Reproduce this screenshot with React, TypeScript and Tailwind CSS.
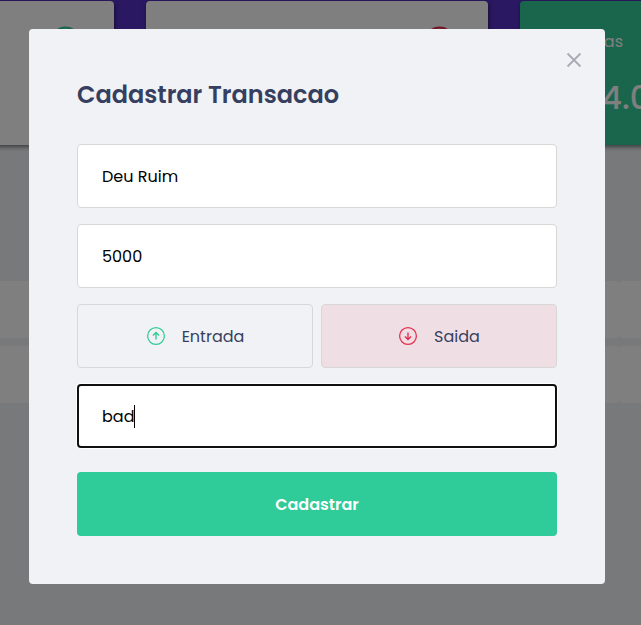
import React from "react";

function ArrowCircle({ down = false, className }: { down?: boolean; className: string }) {
  return (
    <svg viewBox="0 0 20 20" fill="none" stroke="currentColor" className={className}>
      <circle cx="10" cy="10" r="8.4" strokeWidth="1.25" />
      <g transform={down ? "rotate(180 10 10)" : undefined}>
        <path d="M10 13.6V6.6M6.9 9.5L10 6.4L13.1 9.5" strokeWidth="1.4" />
      </g>
    </svg>
  );
}

function SummaryCard({ title, value, green = false, icon }: { title: string; value?: string; green?: boolean; icon?: React.ReactNode }) {
  return (
    <div
      className={
        "h-36 rounded px-8 pt-6 shadow-[1px_2px_4px_rgba(0,0,0,0.5)] " +
        (green ? "bg-[#33cc99] text-white" : "bg-white text-[#363f5f]")
      }
    >
      <div className="flex h-8 items-center justify-between">
        <p className="pt-0.5 text-[16px] leading-8">{title}</p>
        {icon}
      </div>
      {value && (
        <strong className="mt-[14px] block whitespace-nowrap text-[32px] font-medium leading-[54px]">{value}</strong>
      )}
    </div>
  );
}

function TableRow() {
  return (
    <div className="grid h-[57px] grid-cols-[847px_243px]">
      <div className="rounded bg-white" />
      <div className="rounded bg-white" />
    </div>
  );
}

const field =
  "h-16 w-full rounded border border-[#d7d7d7] bg-white px-6 text-[16px] text-black outline-none";

export default function App() {
  return (
    <div className="relative h-[625px] w-[641px] overflow-hidden bg-[#f0f2f5] font-['Poppins','Inter',sans-serif] text-[16px]">
      <div className="h-20 bg-[#5530c4]" />
      <main className="-mt-[79px] -ml-[228px] w-[1090px]">
        <section className="grid grid-cols-3 gap-8">
          <SummaryCard title="" icon={<ArrowCircle className="size-[33px] text-[#33cc95]" />} />
          <SummaryCard title="" icon={<ArrowCircle down className="size-[33px] text-[#e52e4d]" />} />
          <SummaryCard title="Entradas" value="R$ 4.000" green />
        </section>
        <section className="mt-[136px] flex flex-col gap-2">
          <TableRow />
          <TableRow />
        </section>
      </main>

      <div className="absolute inset-0 bg-black/50 pt-[29px] pl-[29px]">
        <div className="relative h-[555px] w-[576px] rounded bg-[#f0f2f5] p-12">
          <button className="absolute top-[21px] right-[21px] text-[#a9aab5]">
            <svg viewBox="0 0 20 20" className="size-5" fill="none" stroke="currentColor" strokeWidth="1.8">
              <path d="M3.5 3.5L16.5 16.5M16.5 3.5L3.5 16.5" />
            </svg>
          </button>
          <form className="flex flex-col">
            <h2 className="mb-8 h-[35px] whitespace-nowrap text-[24px] font-semibold leading-[36px] text-[#363f5f]">
              Cadastrar Transacao
            </h2>
            <input className={field} defaultValue="Deu Ruim" />
            <input className={field + " mt-4"} defaultValue="5000" />
            <div className="my-4 grid grid-cols-2 gap-2">
              <button type="button" className="flex h-16 items-center justify-center rounded border border-[#d7d7d7]">
                <ArrowCircle className="size-5 text-[#33cc95]" />
                <span className="ml-4 pt-0.5 text-[16px] text-[#363f5f]">Entrada</span>
              </button>
              <button type="button" className="flex h-16 items-center justify-center rounded border border-[#d7d7d7] bg-[#efdee4]">
                <ArrowCircle down className="size-5 text-[#e52e4d]" />
                <span className="ml-4 pt-0.5 text-[16px] text-[#363f5f]">Saida</span>
              </button>
            </div>
            <div className="flex h-16 items-center rounded border-2 border-[#101010] bg-white px-[23px] shadow-[0_0_0_1px_white]">
              <span className="pt-0.5 text-[16px] text-black">bad</span>
              <span className="h-[23px] w-px bg-black" />
            </div>
            <button type="button" className="mt-6 h-16 rounded bg-[#2fcb98] pt-0.5 text-[16px] font-semibold text-white">
              Cadastrar
            </button>
          </form>
        </div>
      </div>
    </div>
  );
}
